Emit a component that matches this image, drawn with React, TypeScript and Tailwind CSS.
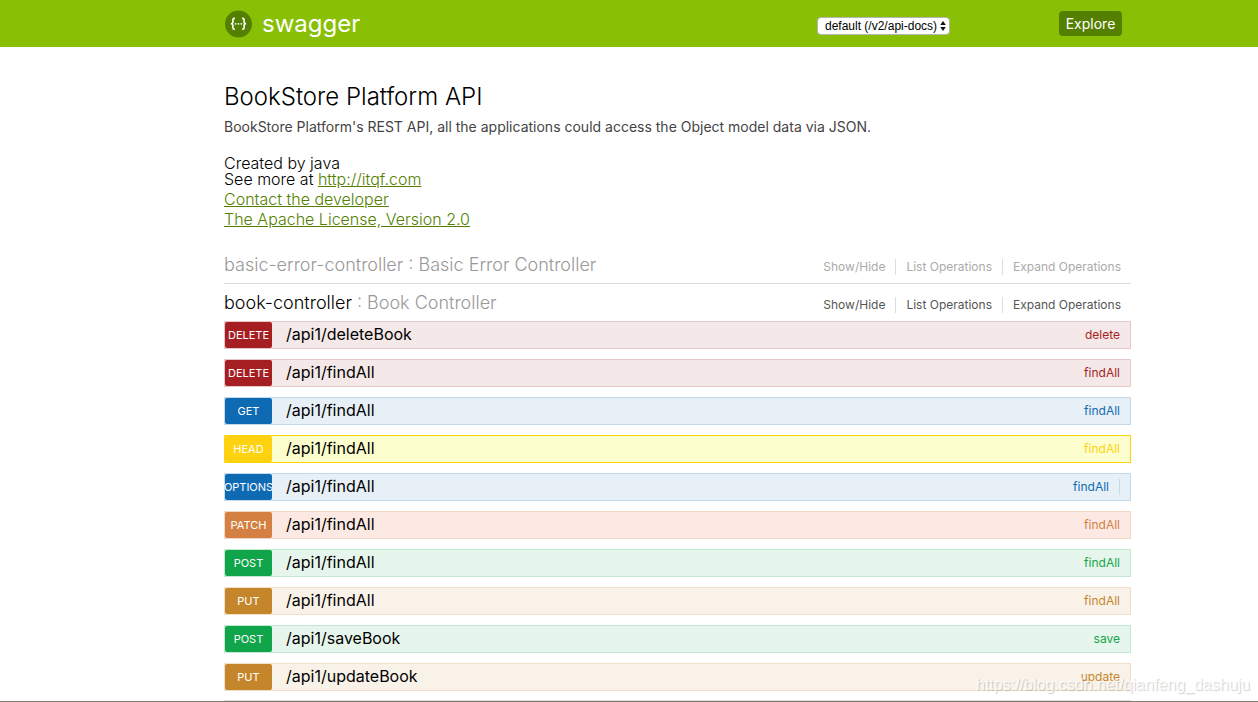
type Operation = {
    method: string;
    path: string;
    label: string;
    row: string;
    badge: string;
    link: string;
    divider?: boolean;
};

const red = { row: "bg-[#f5e8e8] border-[#e8c6c7]", badge: "bg-[#a41e22]", link: "text-[#a41e22]" };
const blue = { row: "bg-[#e7f0f7] border-[#c3d9ec]", badge: "bg-[#0f6ab4]", link: "text-[#0f6ab4]" };
const yellow = { row: "bg-[#fcffcd] border-[#ffd20f]", badge: "bg-[#ffd20f]", link: "text-[#ffd20f]" };
const orange = { row: "bg-[#fce9e3] border-[#f5d5c3]", badge: "bg-[#d38042]", link: "text-[#d38042]" };
const green = { row: "bg-[#e7f6ec] border-[#c3e8d1]", badge: "bg-[#10a54a]", link: "text-[#10a54a]" };
const brown = { row: "bg-[#f9f2e9] border-[#f0e0ca]", badge: "bg-[#c5862b]", link: "text-[#c5862b]" };

const operations: Operation[] = [
    { method: "DELETE", path: "/api1/deleteBook", label: "delete", ...red },
    { method: "DELETE", path: "/api1/findAll", label: "findAll", ...red },
    { method: "GET", path: "/api1/findAll", label: "findAll", ...blue },
    { method: "HEAD", path: "/api1/findAll", label: "findAll", ...yellow },
    { method: "OPTIONS", path: "/api1/findAll", label: "findAll", divider: true, ...blue },
    { method: "PATCH", path: "/api1/findAll", label: "findAll", ...orange },
    { method: "POST", path: "/api1/findAll", label: "findAll", ...green },
    { method: "PUT", path: "/api1/findAll", label: "findAll", ...brown },
    { method: "POST", path: "/api1/saveBook", label: "save", ...green },
    { method: "PUT", path: "/api1/updateBook", label: "update", ...brown },
];

function Logo() {
    return (
        <svg className="h-7 w-7" viewBox="0 0 28 28" fill="none" aria-hidden="true">
            <circle cx="14.5" cy="14" r="13.5" fill="#547f00" />
            <g stroke="#fff" strokeWidth="1.6">
                <path d="M10.9 8.4H10.3Q8.9 8.4 8.9 9.8V12Q8.9 13.7 6.9 13.8Q8.9 13.9 8.9 15.6V17.8Q8.9 19.2 10.3 19.2H10.9" />
                <path d="M18.1 8.4H18.7Q20.1 8.4 20.1 9.8V12Q20.1 13.7 22.1 13.8Q20.1 13.9 20.1 15.6V17.8Q20.1 19.2 18.7 19.2H18.1" />
            </g>
            <g fill="#fff">
                <circle cx="11.7" cy="13.8" r="0.9" />
                <circle cx="14.5" cy="13.8" r="0.9" />
                <circle cx="17.3" cy="13.8" r="0.9" />
            </g>
        </svg>
    );
}

function Header() {
    return (
        <header className="flex h-[47px] shrink-0 items-center bg-[#89bf04] pl-56 pr-[136px]">
            <a href="#" className="flex items-center gap-2.5 text-2xl leading-7 text-white">
                <Logo />
                <span>swagger</span>
            </a>
            <form className="ml-auto flex items-center gap-[109px]">
                <div className="relative mt-1">
                    <select
                        aria-label="API group"
                        className="block h-[18px] w-[133px] appearance-none rounded border border-[#b5b5b5] bg-white pl-[7px] font-['Liberation_Sans',sans-serif] text-xs leading-4 text-black"
                    >
                        <option>default (/v2/api-docs)</option>
                    </select>
                    <svg className="pointer-events-none absolute right-1 top-1 h-2.5 w-1.5" viewBox="0 0 6 10" fill="#111" aria-hidden="true">
                        <path d="M3 0L5.8 4H.2zM3 10L.2 6H5.8z" />
                    </svg>
                </div>
                <button type="button" className="h-[25px] w-[63px] rounded bg-[#547f00] text-sm text-white">
                    Explore
                </button>
            </form>
        </header>
    );
}

function ResourceHeading({ name, title, active }: { name: string; title: string; active?: boolean }) {
    return (
        <div className="flex h-[37px] items-center justify-between text-[#999]">
            <h2 className="text-lg font-light">
                <a href="#" className={active ? "text-black" : "text-[#999]"}>{name}</a> : {title}
            </h2>
            <ul className={`mt-1 flex pr-2.5 text-xs leading-4 ${active ? "text-[#555]" : "text-[#aaa]"}`}>
                <li className="border-r border-[#ddd] pr-2.5"><a href="#">Show/Hide</a></li>
                <li className="border-r border-[#ddd] px-2.5"><a href="#">List Operations</a></li>
                <li className="pl-2.5"><a href="#">Expand Operations</a></li>
            </ul>
        </div>
    );
}

function OperationRow({ method, path, label, row, badge, link, divider }: Operation) {
    return (
        <li className={`flex h-7 items-center border pr-2.5 ${row}`}>
            <a href="#" className={`flex h-full w-[47px] shrink-0 items-center justify-center rounded-xs text-[11px] text-white ${badge}`}>
                {method}
            </a>
            <a href="#" className="ml-3.5 pb-0.5 text-base leading-6 text-black">{path}</a>
            <a href="#" className={`ml-auto text-xs leading-4 ${link} ${divider ? "border-r border-[#c3d9ec] pr-2.5" : ""}`}>
                {label}
            </a>
        </li>
    );
}

export default function App() {
    return (
        <div className="relative flex h-screen flex-col overflow-hidden border-b border-[#7f7b6b] bg-white font-['Inter',sans-serif] text-black">
            <Header />
            <main className="shrink-0 pl-56 pr-[127px] pt-8">
                <h1 className="text-2xl font-light leading-9">BookStore Platform API</h1>
                <p className="text-sm leading-6 text-[#444]">
                    BookStore Platform's REST API, all the applications could access the Object model data via JSON.
                </p>
                <div className="mt-4 text-base font-light leading-4">
                    <p>Created by java</p>
                    <p>
                        See more at <a href="http://itqf.com" className="text-[#547f00] underline">http://itqf.com</a>
                    </p>
                    <p className="pt-0.5 leading-5"><a href="#" className="text-[#547f00] underline">Contact the developer</a></p>
                    <p className="leading-5"><a href="#" className="text-[#547f00] underline">The Apache License, Version 2.0</a></p>
                </div>
                <section className="mt-[17px] border-b border-[#ddd]">
                    <ResourceHeading name="basic-error-controller" title="Basic Error Controller" />
                </section>
                <section>
                    <ResourceHeading name="book-controller" title="Book Controller" active />
                    <ul className="flex flex-col gap-2.5 border-b border-[#ddd] pb-[9px]">
                        {operations.map((operation, index) => (
                            <OperationRow key={index} {...operation} />
                        ))}
                    </ul>
                </section>
            </main>
            <p className="pointer-events-none absolute bottom-1 right-2 font-['Liberation_Sans',sans-serif] text-base text-white/80 [text-shadow:1px_1px_1px_#0003]">
                https://blog.csdn.net/qianfeng_dashuju
            </p>
        </div>
    );
}
